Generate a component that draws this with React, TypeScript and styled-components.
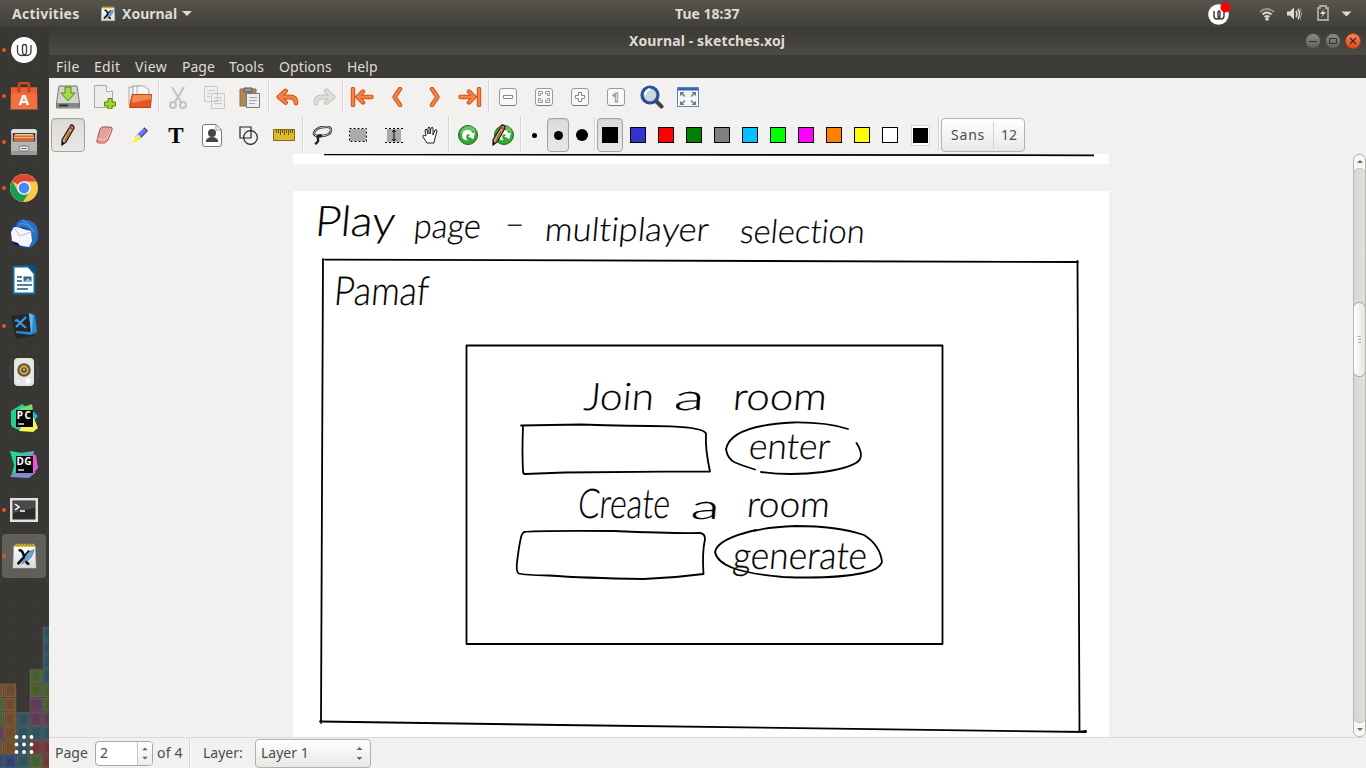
import React from "react";
import styled, { createGlobalStyle, css } from "styled-components";

const Global = createGlobalStyle`
  html, body, #root { margin: 0; padding: 0; height: 100%; }
  body { font-family: "Noto Sans", "Open Sans", sans-serif; overflow: hidden; background: #f2f1f0; }
  *, *::before, *::after { box-sizing: border-box; }
  svg { display: block; }
`;

const Desktop = styled.div`
  width: 1366px; height: 768px; display: flex; flex-direction: column; overflow: hidden;
  font-size: 14px; line-height: 20px; color: #4c4c4c;
`;
const TopBar = styled.header`
  height: 27px; flex: none; display: grid; grid-template-columns: 675px 67px 1fr; align-items: center;
  background: linear-gradient(#57544b, #403f3a); color: #dfdbd2; font-weight: 700;
`;
const TopLeft = styled.div`display: flex; align-items: center; padding-left: 12px;`;
const TopRight = styled.div`display: flex; align-items: center; padding-left: 465px;`;
const Word = styled.span<{ $w?: number; $ls?: number; $gap?: number }>`
  display: block; white-space: nowrap; letter-spacing: ${p => p.$ls ?? 0}px; margin-left: ${p => p.$gap ?? 0}px;
  ${p => p.$w && css`width: ${p.$w}px;`}
`;
const Caret = styled.i`
  border: 5px solid transparent; border-top-color: #dfdbd2; border-bottom: 0; margin-left: 5px;
`;
const Body = styled.div`flex: 1; display: flex; min-height: 0;`;
const Dock = styled.nav`
  width: 49px; position: relative; display: flex; flex-direction: column; background: #393834;
`;
const Wallpaper = styled.svg`position: absolute; left: 0; top: 0;`;
const DockItem = styled.div<{ $on?: boolean; $active?: boolean }>`
  height: 46px; width: 48px; display: flex; align-items: center; justify-content: center; position: relative;
  ${p => p.$active && css`&::before { content: ""; position: absolute; left: 2px; top: 1px; width: 44px; height: 44px; border-radius: 4px; background: rgba(255,255,255,.2); }`}
  ${p => p.$on && css`&::after { content: ""; position: absolute; left: 2px; top: 21px; width: 4px; height: 4px; border-radius: 50%; background: #e95420; }`}
  svg { position: relative; }
`;
const AppsButton = styled.div`margin-top: auto; height: 46px; padding: 11px 0 0 13px; position: relative;`;
const Window = styled.main`flex: 1; display: flex; flex-direction: column; min-width: 0;`;
const TitleBar = styled.div`
  height: 28px; display: flex; align-items: center; padding: 0 5px 0 580px; background: linear-gradient(#3a3935, #4b4a43);
  color: #dfdbd2; font-weight: 700;
`;
const Controls = styled.div`display: flex; gap: 4px; margin-left: auto;`;
const Control = styled.span<{ $close?: boolean }>`
  width: 16px; height: 16px; border-radius: 50%; border: 1px solid ${p => (p.$close ? "#a9441f" : "#4a4943")};
  background: ${p => (p.$close ? "linear-gradient(#f58662,#e2491a)" : "linear-gradient(#8b8a83,#62615a)")};
  svg { margin: -1px; }
`;
const MenuBar = styled.div`height: 23px; display: flex; align-items: center; padding-left: 7px; background: #3c3b37; color: #dfdbd2;`;
const ToolRow = styled.div<{ $h: number; $top?: number }>`
  height: ${p => p.$h}px; display: flex; padding: ${p => p.$top ?? 0}px 0 0 1px; align-items: flex-start; background: #f2f1f0;
`;
const Slot = styled.div<{ $w?: number; $dim?: boolean }>`
  width: ${p => p.$w ?? 36}px; height: 36px; flex: none; display: flex; align-items: center; justify-content: center;
  opacity: ${p => (p.$dim ? 0.45 : 1)};
`;
const Sep = styled.i<{ $status?: boolean }>`
  width: 2px; height: ${p => (p.$status ? 30 : 34)}px; flex: none; background: linear-gradient(90deg, #d6d4d1 50%, #fbfbfa 50%);
`;
const Pressed = styled.div<{ $w: number }>`
  width: ${p => p.$w}px; height: 34px; display: flex; align-items: center; justify-content: center; border-radius: 4px;
  border: 1px solid #a6a39f; background: linear-gradient(#dddbd9, #eae8e6); box-shadow: inset 0 1px 1px #cfcdca;
`;
const Dot = styled.i<{ $d: number }>`width: ${p => p.$d}px; height: ${p => p.$d}px; border-radius: 50%; background: #000;`;
const Swatch = styled.i<{ $c: string }>`width: 16px; height: 16px; border: 1px solid #000; background: ${p => p.$c};`;
const PickerFrame = styled.div`
  width: 19px; height: 21px; padding: 2px 1px 2px 1px; background: #fff; border: 1px solid #d9d7d4; margin-right: 1px;
  i { display: block; width: 15px; height: 15px; }
`;
const FontButton = styled.div`
  width: 84px; height: 34px; margin: 1px 0 0 1px; display: flex; align-items: center; border: 1px solid #b6b2ad; border-radius: 4px;
  background: linear-gradient(#fff, #e9e8e6); padding-left: 9px;
  b { width: 1px; height: 27px; background: #d5d3d0; margin-right: 7px; }
`;
const View = styled.div`flex: 1; min-height: 0; display: flex; background: #f2f1f0;`;
const Canvas = styled.div`flex: 1; display: flex; flex-direction: column; align-items: center; overflow: hidden; gap: 27px;`;
const Sheet = styled.div<{ $h: number }>`width: 816px; height: ${p => p.$h}px; flex: none; background: #fff;`;
const ScrollBar = styled.div`
  width: 13px; display: flex; flex-direction: column; border: 1px solid #b8b5b1; border-radius: 6px; background: #f7f7f6; overflow: hidden;
`;
const ScrollArrow = styled.div<{ $down?: boolean }>`
  height: 13px; flex: none; display: flex; align-items: center; justify-content: center;
  i { border: 3px solid transparent; ${p => (p.$down ? "border-top-color:#6b6b6b;border-bottom:0" : "border-bottom-color:#6b6b6b;border-top:0")}; }
`;
const Track = styled.div`flex: 1; margin: 0 -1px; border: 1px solid #c5c3c0; border-radius: 6px; background: linear-gradient(90deg,#d5d4d2,#e3e2e0); padding-top: 133px;`;
const Thumb = styled.div`
  height: 75px; margin: 0 -1px; border: 1px solid #aaa7a3; border-radius: 6px; background: linear-gradient(90deg,#fff,#e4e3e1);
  display: flex; flex-direction: column; gap: 2px; align-items: center; justify-content: center;
  i { width: 3px; height: 1px; background: #b2b0ad; }
`;
const StatusBar = styled.footer`
  height: 31px; display: flex; align-items: center; padding-left: 6px; background: #f2f1f0; border-top: 1px solid #dcdad8;
`;
const Spin = styled.div`
  width: 58px; height: 25px; display: flex; border: 1px solid #aaa6a1; border-radius: 4px; background: #fff; padding-left: 4px; margin-right: 4px; line-height: 22px;
  svg { margin-left: auto; border-left: 1px solid #c8c5c2; background: linear-gradient(#fff,#eeedec); border-radius: 0 3px 3px 0; }
`;
const Combo = styled.div`
  width: 116px; height: 29px; display: flex; align-items: center; border: 1px solid #b3afaa; border-radius: 4px;
  background: linear-gradient(#fff,#e8e7e5); padding: 0 3px 0 5px; svg { margin-left: auto; }
`;
const Letter = styled.text`font-family: "Noto Sans", sans-serif; font-weight: 700;`;
const Ink = styled.text`font-family: Lato, "Open Sans", sans-serif; font-weight: 300; fill: #000; font-variant-ligatures: none;`;

const W = (p: { s: number }) => (
  <svg width={p.s} height={p.s} viewBox="0 0 26 26">
    <circle cx="13" cy="13" r="13" fill="#fff" />
    <path d="M6.500 8v6q0 4.500 4 4.500h1q4 0 4-4.500v-4.500q0-2-2-2t-2 2V14q0 4.500 4 4.500 4.500 0 4.500-4.500V8" fill="none" stroke="#3b3b3b" strokeWidth="1.300" />
  </svg>
);
const XIcon = ({ s }: { s: number }) => (
  <svg width={s} height={s} viewBox="0 0 26 28">
    <defs><linearGradient id="xp" x2="0" y2="1"><stop stopColor="#fff" /><stop offset="1" stopColor="#d9d9d9" /></linearGradient></defs>
    <path d="M2 3h22l1 23H1z" fill="url(#xp)" stroke="#bbb" strokeWidth=".5" />
    <path d="M3.500 2.500h20" stroke="#cfae16" strokeWidth="3.400" strokeDasharray="2.200 .7" />
    <path d="M7 8q3-2 5 4l3 8q1 2 3 1M18 8q-5 6-12 14" fill="none" stroke="#080808" strokeWidth="2.700" />
    <path d="M23 7q-7 1-10 9l-3 6 4-3q7-2 9-12" fill="#6ca3d8" stroke="#3a6191" strokeWidth=".6" />
  </svg>
);

const dockIcons: Record<string, React.ReactNode> = {
  w: <W s={26} />,
  bag: <svg width="28" height="28" viewBox="0 0 28 28"><path d="M9 7V2.500q0-1.500 2-1.500h6q2 0 2 1.500V7" fill="none" stroke="#d74a1f" strokeWidth="2.600" /><path d="M1 5.500h26l.5 22H.5z" fill="#f07040" /><path d="M1 5.500h26v6H1z" fill="#ed6130" /><path d="M9 6v3M19 6v3" stroke="#c43f19" strokeWidth="3" strokeLinecap="round" /><Letter x="14" y="23" textAnchor="middle" fontSize="15" fill="#fff">A</Letter></svg>,
  files: <svg width="28" height="28" viewBox="0 0 28 28"><path d="M1 3l2-2h22l2 2v24H1z" fill="#aaa" /><path d="M1 3l2-2h22l2 2v2H1z" fill="#dedede" /><path d="M3 5h22v9H3z" fill="#4c4039" /><path d="M4 7h20v6H4z" fill="#d9662b" /><path d="M5 6h18v1.500H5zM4 9h20v1H4z" fill="#f0c19b" /><path d="M1 13.500h26V27H1z" fill="#b5b5b5" /><path d="M1 23h26v4H1z" fill="#999" /><rect x="9" y="18" width="10" height="5" rx="2" fill="#e8e8e8" stroke="#777" /><path d="M11 20.500h6" stroke="#777" /></svg>,
  chrome: <svg width="28" height="28" viewBox="0 0 28 28"><circle cx="14" cy="14" r="14" fill="#fbc94a" /><path d="M14 14L1.900 7A14 14 0 0 1 26.200 7.500H14z" fill="#dc4639" /><path d="M2 7a14 14 0 0 0 11 21l6.500-10.500L8 17z" fill="#159d58" /><circle cx="14" cy="14" r="6.800" fill="#fff" /><circle cx="14" cy="14" r="5.400" fill="#4687f4" /></svg>,
  bird: <svg width="30" height="30" viewBox="0 0 30 30"><path d="M12 0q18 1 18 17 0 8-12 13-8 0-13-8Q-1 13 4 6q4-4 8-6" fill="#1c418e" /><path d="M12 1q17-2 17 15 0 9-9 13 5-8 2-16-6-7-15-4Q7 3 12 1" fill="#2a70be" /><path d="M13 1q7 3 11 11M10 5q9-2 15 8" fill="none" stroke="#5aa5de" /><path d="M2 13L5 8q6 0 9 2l8 2 1 10-3 6Q8 27 3 22z" fill="#f7f7fa" /><path d="M6 10l5 7 11-4" stroke="#bbbbc4" fill="none" /><path d="M3 22l3 4 5 1-2-3z" fill="#231156" /></svg>,
  writer: <svg width="24" height="30" viewBox="0 0 24 30"><path d="M1.500 1.500h15l6 7v20h-21z" fill="#fff" stroke="#12649a" strokeWidth="2" /><path d="M16 0h8v9z" fill="#0b4e7e" /><path d="M5 12h5M5 16h5M5 20h15M5 24h11" stroke="#175887" strokeWidth="1.700" /><path d="M11.500 11.500h8v5h-8z" fill="#2c6792" /><path d="M13 16l3-3 3 3" fill="#9fc2da" /></svg>,
  code: <svg width="28" height="28" viewBox="0 0 28 28"><path d="M1 4l16-2 7 22-18 3z" fill="#26262a" /><path d="M19 1l6 2 2 17-6 3-15-2v-2l15 1z" fill="#258ad2" /><path d="M19 1l4 2-1 17-1 1z" fill="#62b8ee" /><path d="M5 9l2-1 9 8M16 5L6 15" stroke="#3b99dc" strokeWidth="2.200" fill="none" /></svg>,
  speaker: <svg width="30" height="30" viewBox="0 0 30 30"><path d="M3 7q-4 8 0 16M27 7q4 8 0 16" stroke="#34475c" strokeWidth="2" fill="none" /><rect x="5" y="1" width="20" height="28" rx="4" fill="#e5e5e2" /><circle cx="15" cy="13" r="6.700" fill="#55534a" /><circle cx="15" cy="13" r="4.700" fill="#d0aa22" /><circle cx="15" cy="13" r="2.500" fill="#444" /><circle cx="15" cy="12.500" r="1" fill="#eee" /><circle cx="19" cy="24" r="2.500" fill="#fff" /><circle cx="9" cy="24" r="1" fill="#fff" /></svg>,
  pc: <svg width="28" height="28" viewBox="0 0 28 28"><path d="M1 7L12 0l7 5-8 22-9-4-1-3z" fill="#26ce91" /><path d="M11 4L22 0l1 7-12 8z" fill="#79d969" /><path d="M22 6l6 6-4 5z" fill="#14c0d9" /><path d="M12 22l11-10 5 12-5 4-14-1z" fill="#f4f45b" /><path d="M6 6h17v17H6z" fill="#080808" /><Letter x="6.800" y="14.500" fontSize="10" textLength="14" fill="#fff">PC</Letter><path d="M8 20h6" stroke="#fff" strokeWidth="1.300" /></svg>,
  dg: <svg width="28" height="28" viewBox="0 0 28 28"><path d="M0 1l12 2-2 24H1l3-12z" fill="#27d493" /><path d="M10 3l14-2-2 14H9z" fill="#49bbb0" /><path d="M20 4l6 1 2 13-6 7z" fill="#e759d9" /><path d="M4 22h22l-7 6-19-1z" fill="#7d8bd3" /><path d="M6 6h17v17H6z" fill="#080808" /><Letter x="6.500" y="14.500" fontSize="10" textLength="15" fill="#fff">DG</Letter><path d="M8 20h6" stroke="#fff" strokeWidth="1.300" /></svg>,
  term: <svg width="28" height="24" viewBox="0 0 28 24"><path d="M0 0h28v24H0z" fill="#e2e2df" /><path d="M2.500 2.500h23v19h-23z" fill="#292a2a" /><path d="M3 3h22v7L3 15z" fill="#484a4a" /><path d="M5 6l4 3-4 3M10 13h5" stroke="#fff" strokeWidth="1.500" fill="none" /></svg>,
  x: <XIcon s={27} />,
};
const dock: [string, boolean][] = [["w", true], ["bag", true], ["files", true], ["chrome", true], ["bird", false], ["writer", false], ["code", true], ["speaker", false], ["pc", false], ["dg", false], ["term", true], ["x", true]];

const tile: Record<string, string> = { t: "#345662", g: "#4b6334", b: "#73512f", p: "#633e5b", r: "#75393b", n: "#344874" };
/* left edge, first row, block colours from top to bottom */
const stacks: [number, number, string][] = [[-9.5, 5, "bggpbn"], [3.5, 5, "bbbbbn"], [16.5, 7, "tttt"], [29.5, 4, "ggpptrg"], [42.5, 1, "ttttggptrr"]];

const Tiles = () => (
  <Wallpaper width="49" height="741">
    <defs><pattern id="grid" width="13" height="14.200" patternUnits="userSpaceOnUse" x="3.500" y="2.800"><path d="M13 0H0v14.200" fill="none" stroke="#32312e" strokeWidth="1.300" /></pattern></defs>
    <rect width="49" height="741" fill="url(#grid)" />
    {stacks.map(([x, start, cells]) => cells.split("").map((c, i) => {
      const y = 599.5 + (start - 1 + i) * 14.2;
      return <g key={`${x}-${i}`}><rect x={x + 0.5} y={y + 0.5} width="12" height="13.200" fill={tile[c]} stroke="#fff" strokeOpacity=".12" /><rect x={x + 3.5} y={y + 3.5} width="6" height="7" fill="#000" opacity=".06" /></g>;
    }))}
  </Wallpaper>
);

const O = "#f48443", OD = "#cf5016";
const Arrow = ({ d }: { d: string }) => (
  <svg width="24" height="20" viewBox="-1 0 24 20" fill="none" strokeLinecap="round" strokeLinejoin="round">
    <path d={d} stroke={OD} strokeWidth="4.400" /><path d={d} stroke={O} strokeWidth="2.400" />
  </svg>
);
const Curved = ({ flip }: { flip?: boolean }) => (
  <svg width="24" height="20" viewBox="-1 0 24 20" fill="none" strokeLinecap="round" strokeLinejoin="round" transform={flip ? "scale(-1,1)" : undefined}>
    <path d="M8.500 4L2 10l6.500 5.500M3 10h10q6 0 6 6" stroke={flip ? "#c0c0bc" : OD} strokeWidth="4.800" /><path d="M8.500 4L2 10l6.500 5.500M3 10h10q6 0 6 6" stroke={flip ? "#dededa" : O} strokeWidth="2.800" />
  </svg>
);
const ZoomBox = ({ children }: { children: React.ReactNode }) => (
  <svg width="18" height="18" viewBox="0 0 18 18"><rect x=".5" y=".5" width="17" height="17" rx="2.500" fill="#f8f8f7" stroke="#999995" /><path d="M2 17.500h14" stroke="#777" /><g fill="#fff" stroke="#888884">{children}</g></svg>
);
const row1: Record<string, React.ReactNode> = {
  save: <svg width="24" height="24" viewBox="0 0 24 24"><path d="M3 1h18l2.500 17v5H.5v-5z" fill="#d2d3d0" stroke="#777974" /><path d="M1 18h22v4.500H1z" fill="#858783" /><path d="M3 20.500h9" stroke="#333" strokeWidth="2" /><path d="M9 2h6v6h4l-7 8-7-8h4z" fill="#a4d944" stroke="#4f8d0b" /></svg>,
  add: <svg width="24" height="24" viewBox="0 0 24 24"><path d="M2.500.500h12l6 6v16h-18z" fill="#ececea" stroke="#aaa" /><path d="M14.500.500v6h6" fill="#fff" stroke="#aaa" /><path d="M16 13.500h4v3.500h3.500v4H20v3h-4v-3h-3.500v-4H16z" fill="#a2d52f" stroke="#4e8808" /></svg>,
  open: <svg width="24" height="24" viewBox="0 0 24 24"><path d="M1 2h8l2 2h9v16H1z" fill="#f4f4f3" stroke="#aaa" /><path d="M5 1h9l4 4v8H5z" fill="#fff" stroke="#999" /><path d="M9 1h7l5 4v8H9z" fill="#f6f6f5" stroke="#aaa" /><path d="M4 9.500h19.500l-1 13H1.500z" fill="#e95423" stroke="#b9451a" /><path d="M4.500 10h18.500v4L4 18z" fill="#f38b53" /></svg>,
  cut: <svg width="20" height="23" viewBox="0 0 20 23" fill="none" stroke="#888" strokeWidth="2"><path d="M4 1l9 15M16 1L7 16" /><circle cx="5" cy="19" r="3" /><circle cx="15" cy="19" r="3" /></svg>,
  copy: <svg width="21" height="23" viewBox="0 0 21 23" fill="#eee" stroke="#999"><path d="M.500.500h13v15H.500zM7.500 7.500h13v15h-13z" /><path d="M3 4.500h8M3 7.500h3M3 10.500h3M10 11.500h8M10 14.500h8M10 17.500h8" /></svg>,
  paste: <svg width="22" height="23" viewBox="0 0 22 23"><path d="M1 3h16v17H1z" fill="#b28757" stroke="#8d6a44" /><path d="M5 2h8v4H5z" fill="#999" stroke="#555" /><path d="M7.500 7.500h13v14h-13z" fill="#eee" stroke="#777" /><path d="M10 11.500h8M10 14.500h8M10 17.500h6" stroke="#aaa" /></svg>,
  first: <Arrow d="M2 2v16M12 4.500L6.500 10l5.500 5.500M7 10h13.500" />, prev: <Arrow d="M13 2L7.500 10l5.500 8" />, next: <Arrow d="M9 2l5.500 8L9 18" />, last: <Arrow d="M20 2v16M10 4.500l5.500 5.500-5.500 5.500M15 10H1.500" />,
  out: <ZoomBox><path d="M4.500 7.500h9v3h-9z" /></ZoomBox>,
  fit: <ZoomBox><path d="M3.500 7.500v-4h4v2h-2v2zM14.500 7.500v-4h-4v2h2v2zM3.500 10.500v4h4v-2h-2v-2zM14.500 10.500v4h-4v-2h2v-2z" strokeWidth=".9" /></ZoomBox>,
  plus: <ZoomBox><path d="M7.500 4.500h3v3h3v3h-3v3h-3v-3h-3v-3h3z" /></ZoomBox>,
  one: <ZoomBox><Letter x="5" y="13.500" fontSize="13" strokeWidth=".9">1</Letter></ZoomBox>,
  find: <svg width="24" height="24" viewBox="0 0 24 24"><path d="M16 16l5.500 5.500" stroke="#42423f" strokeWidth="4" strokeLinecap="round" /><circle cx="10" cy="10" r="8" fill="#c9d6e4" stroke="#2a4f96" strokeWidth="3.200" /><path d="M5 10q1-5 5-6" stroke="#fff" strokeWidth="2" fill="none" /></svg>,
  full: <svg width="22" height="20" viewBox="0 0 22 20"><path d="M.5.500h21v19H.5z" fill="#f5f5f5" stroke="#5983b8" /><path d="M1 1h20v2.500H1z" fill="#2f68ba" /><path d="M3 5h4.500L6 6.500 8.500 9l-1 1L5 7.500 3 9zM19 5h-4.500L16 6.500 13.500 9l1 1L17 7.500 19 9zM3 18h4.500L6 16.500 8.500 14l-1-1L5 15.500 3 14zM19 18h-4.500l1.500-1.500-2.500-2.500 1-1 2.500 2.500 2-1.500z" fill="#777" /></svg>,
};
const Pencil = () => <svg width="14" height="22" viewBox="0 0 14 22"><path d="M10 1q3 0 3 3L5 18l-4 3V16z" fill="#dba95a" stroke="#25201b" strokeWidth="1.300" /><path d="M9 2l3 2-1 2-3-2z" fill="#cb3934" /><path d="M9 7L4 17" stroke="#7c5524" /><path d="M1 17l2 2-2 2z" fill="#000" /></svg>;
const Sync = () => <svg width="20" height="20" viewBox="0 0 20 20"><circle cx="10" cy="10" r="9.500" fill="#37a835" stroke="#147014" /><path d="M2 8Q5 1 11 1t7 6q-5-2-8 0z" fill="#8dd58a" opacity=".6" /><path d="M4 10.500Q4 5 10 5q3 0 4.500 3L17 7.500 15.500 14 10 11.500l2-1Q11 8.500 9 9.500q-2 2 .5 6Q4 15 4 10.500" fill="#fff" /></svg>;
const row2: Record<string, React.ReactNode> = {
  erase: <svg width="17" height="18" viewBox="0 0 17 18"><path d="M6 1h8q3 0 2 3l-4 10-3 3H3q-3 0-2-3L4 3z" fill="#e8a09e" stroke="#9f5351" /><path d="M1 13q5 1 10 0l4-10" stroke="#ffc3c0" fill="none" /><path d="M2 14h9l-2 2.500H3q-2 0-1-2.500" fill="#ff8e8e" /></svg>,
  mark: <svg width="16" height="16" viewBox="0 0 16 16"><path d="M12 .7l3.500 3L9 10.500 5.500 7z" fill="#6c74ee" /><path d="M12 .7l3.500 3L9 10.500" fill="none" stroke="#15151c" /><path d="M5.500 7L9 10.500 7 12 3.500 9.500z" fill="#eee" stroke="#999" strokeWidth=".6" /><path d="M.5 15.500l3-6L7 12.500l-3 2.200z" fill="#ff0" /></svg>,
  text: <svg width="26" height="28" viewBox="0 0 26 28"><text x="13" y="21.500" textAnchor="middle" fontFamily="Liberation Serif, serif" fontWeight="700" fontSize="23">T</text></svg>,
  person: <svg width="20" height="23" viewBox="0 0 20 23"><path d="M3 .500h11l5.500 5.500v14q0 2.500-2.500 2.500H3Q.500 22.500.500 20V3Q.500.500 3 .500" fill="#fff" stroke="#777" /><path d="M14 .500v5.500h5.500" fill="none" stroke="#999" /><circle cx="10" cy="9" r="4" fill="#454545" /><path d="M4 18v-2q2-3 6-3t6 3v2z" fill="#454545" /></svg>,
  shape: <svg width="19" height="19" viewBox="0 0 19 19" fill="none" stroke="#222" strokeWidth="1.200"><path d="M1 1h11v11H1z" /><circle cx="11.500" cy="11.500" r="6.800" /></svg>,
  ruler: <svg width="22" height="12" viewBox="0 0 22 12"><path d="M.5.500h21v11H.5z" fill="#ddb92f" stroke="#876c0d" /><path d="M3.500 1v3M5.500 1v3M7.500 1v5M9.500 1v3M11.500 1v5M13.500 1v3M15.500 1v5M17.500 1v3M19.500 1v3" stroke="#4d3b00" strokeWidth=".8" /></svg>,
  lasso: <svg width="20" height="19" viewBox="0 0 20 19" fill="none"><path d="M5 10Q0 9 3 5t9-4q7-1 7 3 0 5-9 6-5 0-4 3t-3 5M4 11q4-3 6-1" stroke="#222" strokeWidth="2.300" /><path d="M5 10Q0 9 3 5t9-4q7-1 7 3 0 5-9 6" stroke="#ddd" strokeWidth=".9" /></svg>,
  rect: <svg width="18" height="14" viewBox="0 0 18 14"><path d="M.5.500h17v13H.5z" fill="#aaa" stroke="#fff" /><path d="M.5.500h17v13H.5z" fill="none" stroke="#000" strokeDasharray="2 2" /></svg>,
  vertical: <svg width="18" height="15" viewBox="0 0 18 15"><path d="M2 1h14v13H2z" fill="#aaa" /><path d="M0 .5h18M0 14.500h18" stroke="#000" strokeDasharray="2 2" /><path d="M9 2v11M7 4l2-2 2 2M7 11l2 2 2-2" stroke="#000" fill="none" /></svg>,
  hand: <svg width="16" height="18" viewBox="0 0 16 18"><path d="M5 17l-4-6q-1-3 3-1L3 4q1-2 2 0l1 4V2q1-2 2 0v6l1-6q2-2 2 1v6l2-5q2-1 2 1l-2 7-1 5z" fill="#fff" stroke="#222" /></svg>,
  sync: <Sync />,
};
const DefaultPen = styled.div`
  position: relative; width: 22px; height: 22px; display: flex; align-items: center; justify-content: flex-end;
  > svg:last-child { position: absolute; left: 0; top: 0; }
`;
const colors = ["#3333cc", "#ff0000", "#008000", "#808080", "#00c0ff", "#00ff00", "#ff00ff", "#ff8000", "#ffff00", "#ffffff"];

/* word, left edge, baseline, written width, size */
const words: [string, number, number, number, number][] = [
  ["Play", 314, 236, 80, 42], ["page", 413, 238, 67, 34], ["–", 504, 234, 20, 30], ["multiplayer", 544, 241, 164, 33], ["selection", 739, 243, 125, 33],
  ["Pamaf", 333, 305, 95, 40], ["Join", 583, 410, 70, 38], ["a", 673, 410, 31, 36], ["room", 732, 410, 94, 38], ["enter", 748, 459, 81, 36],
  ["Create", 577, 518, 92, 41], ["a", 690, 519, 29, 34], ["room", 746, 517, 83, 36], ["generate", 732, 569, 134, 38],
];
const menus: [string, number, number][] = [["File", 38, 0.3], ["Edit", 41, 0.3], ["View", 47, 0.4], ["Page", 47, 0], ["Tools", 50, 0.2], ["Options", 68, 0.1], ["Help", 34, 0]];
const Updown = () => <svg width="15" height="23" viewBox="0 0 15 23"><path d="M7.500 5l3 3h-6zM7.500 18l3-3h-6z" fill="#666" /></svg>;

export default function App() {
  return (
    <><Global /><Desktop>
      <TopBar>
        <TopLeft><Word $w={88} $ls={0.25}>Activities</Word><XIcon s={16} /><Word $gap={6}>Xournal</Word><Caret /></TopLeft>
        <Word>Tue 18:37</Word>
        <TopRight>
          <svg width="24" height="24" viewBox="0 0 24 24"><circle cx="11.500" cy="12.500" r="10.300" fill="#fff" /><path d="M7 9v5q0 3 3 3t3-3v-4q0-1-1-1t-1 1v4q0 3 3 3t3-3V9" fill="none" stroke="#333" strokeWidth="1.400" /><circle cx="18.500" cy="5.500" r="5" fill="#f00" /></svg>
          <svg width="125" height="20" viewBox="0 0 125 20" fill="none" stroke="#dfdbd2">
            <path d="M29 8q7-6 14 0" strokeWidth="1.700" opacity=".5" /><path d="M31.500 10.500q4.500-4 9 0M33.500 13q2.500-2 5 0" strokeWidth="1.800" /><circle cx="36" cy="15" r="1.800" fill="#dfdbd2" stroke="none" />
            <path d="M56 7.500h3l4-4v12l-4-4h-3z" fill="#dfdbd2" stroke="none" /><path d="M65 7q2 3 0 6M67 5q3 5 0 10" strokeWidth="1.500" /><path d="M69 4q3 6 0 12" opacity=".5" />
            <path d="M87 4h2V2h6v2h2v12H87z" opacity=".65" strokeWidth="1.800" /><path d="M93 5l-4 5h3l-2 4 5-6h-3z" fill="#dfdbd2" stroke="none" /><path d="M110.500 7.500h10l-5 5z" fill="#dfdbd2" stroke="none" />
          </svg>
        </TopRight>
      </TopBar>
      <Body>
        <Dock><Tiles />
          {dock.map(([n, on]) => <DockItem key={n} $on={on} $active={n === "x"}>{dockIcons[n]}</DockItem>)}
          <AppsButton><svg width="22" height="22" viewBox="0 0 22 22" fill="#fff">{[3, 10.5, 18].map(y => [3.5, 11, 18.5].map(x => <circle key={`${x}-${y}`} cx={x} cy={y + 1} r="1.900" />))}</svg></AppsButton>
        </Dock>
        <Window>
          <TitleBar><Word $ls={0.12}>Xournal - sketches.xoj</Word><Controls>
            <Control><svg width="16" height="16" stroke="#34332e"><path d="M4 8.500h8" /></svg></Control>
            <Control><svg width="16" height="16" stroke="#34332e" fill="none"><path d="M4.500 5.500h7v5h-7z" /></svg></Control>
            <Control $close><svg width="16" height="16" stroke="#44231a" strokeWidth="1.300"><path d="M5 5l6 6M11 5l-6 6" /></svg></Control>
          </Controls></TitleBar>
          <MenuBar>{menus.map(([m, w, l]) => <Word key={m} $w={w} $ls={l}>{m}</Word>)}</MenuBar>
          <ToolRow $h={39} $top={1}>
            {["save", "add", "open", "|", "cut", "copy", "paste", "|", "undo", "redo", "|", "first", "prev", "next", "last", "|", "out", "fit", "plus", "one", "find", "full"].map((n, i) =>
              n === "|" ? <Sep key={i} /> : <Slot key={n} $dim={n === "cut" || n === "copy"}>{n === "undo" ? <Curved /> : n === "redo" ? <Curved flip /> : row1[n]}</Slot>)}
          </ToolRow>
          <ToolRow $h={37}>
            <Slot><Pressed $w={34}><Pencil /></Pressed></Slot>
            {["erase", "mark", "text", "person", "shape", "ruler", "|", "lasso", "rect", "vertical", "hand", "|", "sync"].map((n, i) => n === "|" ? <Sep key={i} /> : <Slot key={n}>{row2[n]}</Slot>)}
            <Slot $w={34}><DefaultPen><Sync /><Pencil /></DefaultPen></Slot><Sep />
            <Slot $w={24}><Dot $d={5} /></Slot><Slot $w={24}><Pressed $w={22}><Dot $d={9} /></Pressed></Slot><Slot $w={24}><Dot $d={12} /></Slot><Sep />
            <Slot $w={28}><Pressed $w={26}><Swatch $c="#000" /></Pressed></Slot>
            {colors.map(c => <Slot key={c} $w={28}><Swatch $c={c} /></Slot>)}
            <Slot $w={34}><PickerFrame><Swatch $c="#000" /></PickerFrame></Slot><Sep />
            <FontButton><Word $w={42} $ls={0.8}>Sans</Word><b /><Word>12</Word></FontButton>
          </ToolRow>
          <View>
            <Canvas>
              <Sheet $h={10}><svg width="816" height="10" viewBox="293 154 816 10"><path d="M324 154.300L1094 155.300" stroke="#000" strokeWidth="1.800" /></svg></Sheet>
              <Sheet $h={547}>
                <svg width="816" height="547" viewBox="293 191 816 547" fill="none" stroke="#000" strokeWidth="1.800" strokeLinecap="round" strokeLinejoin="round">
                  <path d="M323 259L321 723M325 259.600L1078 262M1077.500 261L1079.500 732M320 721.500L560 725 1086 732M1079 732l7-1" />
                  <path d="M466.500 345.500h476v298.500h-476z" />
                  <path d="M521 425.500q25-.5 60-1 50 1.500 90 1.800 33 1.500 35 7.200-1 15 4 38l-45 .2-100 .8-40 1.500q-2 0-2-3-1-20 0-45" />
                  <path d="M848 429q-22-7-55-6.500-63 3-67 27 2 10 9 13 7 3 20 7M761 472q30 4 62 0 33-5 37-13 3-6-3.500-16" />
                  <path d="M524 532q7-1.500 90-1 58 2.500 86 2 5 .5 5 6-3 14-1.500 35-30 4-60 5-60-1-95-3.500-24-.5-30-2-3-2-1-15 2-16 4-23 1-3 3-3.500" />
                  <path d="M756 530Q717 539 715 552q2 10 18 16 16 6 50 9 52 2 80-4 16-3 19-11-2-17-18-27-27-9-68-9-28 1-42 5" />
                  {words.map(([t, x, y, w, size], i) => <Ink key={i} x="0" y="0" fontSize={size} textLength={w} lengthAdjust="spacingAndGlyphs" strokeWidth=".2" transform={`translate(${x} ${y}) skewX(-5)`}>{t}</Ink>)}
                </svg>
              </Sheet>
            </Canvas>
            <ScrollBar><ScrollArrow><i /></ScrollArrow><Track><Thumb><i /><i /><i /></Thumb></Track><ScrollArrow $down><i /></ScrollArrow></ScrollBar>
          </View>
          <StatusBar>
            <Word $w={40}>Page</Word><Spin>2<Updown /></Spin><Word $w={32} $ls={0.2}>of 4</Word><Sep $status />
            <Word $w={52} $gap={12}>Layer:</Word><Combo><Word>Layer 1</Word><Updown /></Combo>
          </StatusBar>
        </Window>
      </Body>
    </Desktop></>
  );
}
